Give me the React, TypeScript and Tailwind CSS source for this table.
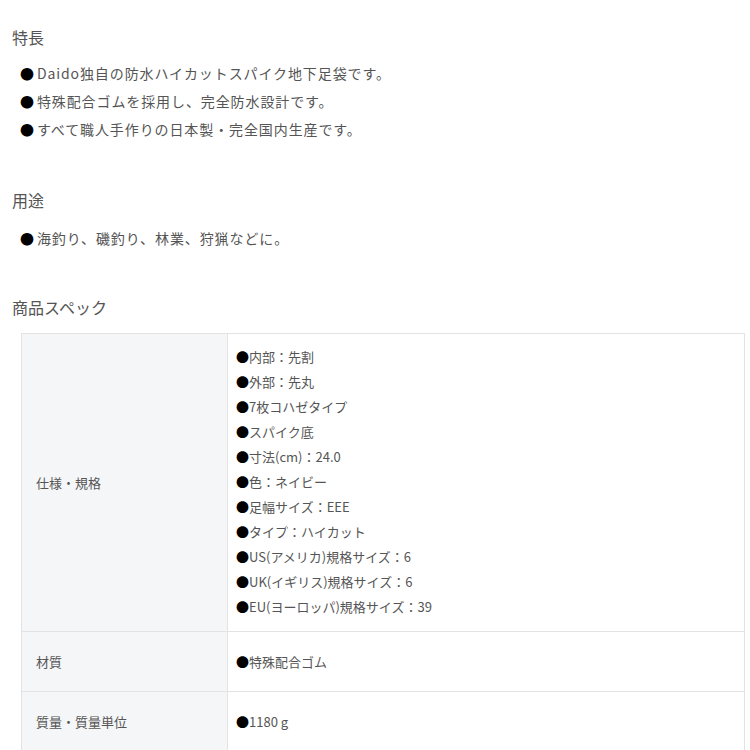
const features = [
  'Daido独自の防水ハイカットスパイク地下足袋です。',
  '特殊配合ゴムを採用し、完全防水設計です。',
  'すべて職人手作りの日本製・完全国内生産です。',
]

const uses = ['海釣り、磯釣り、林業、狩猟などに。']

const specs = [
  {
    label: '仕様・規格',
    items: [
      '内部：先割',
      '外部：先丸',
      '7枚コハゼタイプ',
      'スパイク底',
      '寸法(cm)：24.0',
      '色：ネイビー',
      '足幅サイズ：EEE',
      'タイプ：ハイカット',
      'US(アメリカ)規格サイズ：6',
      'UK(イギリス)規格サイズ：6',
      'EU(ヨーロッパ)規格サイズ：39',
    ],
  },
  { label: '材質', items: ['特殊配合ゴム'] },
  { label: '質量・質量単位', items: ['1180 g'] },
]

function BulletList({ items }: { items: string[] }) {
  return (
    <ul className="pl-[8px]">
      {items.map((t) => (
        <li key={t} className="text-[14px] leading-[28px] tracking-[0.9px] text-[#555]">
          <span className="mr-[2px] text-black">●</span>
          {t}
        </li>
      ))}
    </ul>
  )
}

export default function App() {
  return (
    <div
      className="min-h-screen bg-white pl-[12px] pt-[25px] text-[#555]"
      style={{ fontFamily: '"Noto Sans CJK JP", "Noto Sans", sans-serif' }}
    >
      <h2 className="text-[16px] leading-[24px] font-normal">特長</h2>
      <div className="mt-[10px]">
        <BulletList items={features} />
      </div>

      <h2 className="mt-[45px] text-[16px] leading-[24px] font-normal">用途</h2>
      <div className="mt-[12px]">
        <BulletList items={uses} />
      </div>

      <h2 className="mt-[43px] text-[16px] leading-[24px] font-normal">商品スペック</h2>

      <table className="mt-[14px] ml-[9px] w-[724px] border-collapse text-[13px]">
        <tbody>
          {specs.map((row) => (
            <tr key={row.label}>
              <th className="w-[206px] border border-[#e3e3e3] bg-[#f5f6f8] pl-[14px] text-left align-middle font-normal text-[#555]">
                {row.label}
              </th>
              <td
                className={
                  row.items.length > 1
                    ? 'border border-[#e3e3e3] pl-[8px] pt-[10px] pb-[12px] text-[#555]'
                    : 'border border-[#e3e3e3] pl-[8px] pt-[17px] pb-[17px] text-[#555]'
                }
              >
                {row.items.map((t) => (
                  <div key={t} className="leading-[25px]">
                    <span className="text-black">●</span>
                    {t}
                  </div>
                ))}
              </td>
            </tr>
          ))}
        </tbody>
      </table>
    </div>
  )
}
